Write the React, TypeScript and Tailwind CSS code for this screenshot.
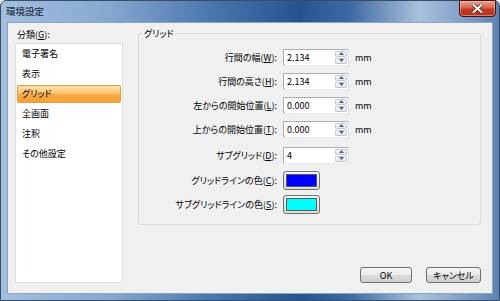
import React from 'react';

const font = "font-['Noto_Sans_CJK_JP','Noto_Sans',sans-serif] [font-feature-settings:'palt']";

function Arrow({ up }: { up?: boolean }) {
  return (
    <svg width="5" height="3" viewBox="0 0 5 3">
      <path d={up ? 'M0 3 L2.5 0 L5 3 Z' : 'M0 0 L5 0 L2.5 3 Z'} fill="#4d6185" />
    </svg>
  );
}

function SpinInput({ value }: { value: string }) {
  return (
    <div className="flex h-[17px] w-[66px] items-stretch border border-[#abadb3] border-r-[#dbdfe6] border-b-[#e3e9ef] bg-white">
      <div className="flex flex-1 items-center pl-[3px] leading-none">{value}</div>
      <div className="my-px mr-px flex w-[12px] flex-col gap-px">
        <div className="flex flex-1 items-center justify-center rounded-[1px] border border-[#c3cad4] bg-gradient-to-b from-[#f6f6f6] to-[#e4e6ea]">
          <Arrow up />
        </div>
        <div className="flex flex-1 items-center justify-center rounded-[1px] border border-[#c3cad4] bg-gradient-to-b from-[#f6f6f6] to-[#e4e6ea]">
          <Arrow />
        </div>
      </div>
    </div>
  );
}

function ColorButton({ color }: { color: string }) {
  return (
    <div className="h-[19px] w-[37px] rounded-[3px] border border-[#707070] bg-gradient-to-b from-[#f4f4f4] to-[#dcdcdc] p-[2px]">
      <div className={`h-full w-full border border-[#5a5a5a] ${color}`} />
    </div>
  );
}

function Label({ text, k }: { text: string; k: string }) {
  return (
    <div className="pr-0 text-right leading-none">
      {text}(<u>{k}</u>):
    </div>
  );
}

export default function App() {
  const items = ['電子署名', '表示', 'グリッド', '全画面', '注釈', 'その他設定'];
  return (
    <div className={`${font} flex h-[301px] w-[500px] flex-col rounded-t-[6px] border border-[#3a4d66] bg-[linear-gradient(90deg,#a3bfe0_0%,#86a7cf_22%,#4a77ad_42%,#24548e_60%,#3d6aa2_70%,#a9c1dc_84%,#8eaacd_90%,#5e83b2_100%)] text-[9px] text-black`}>
      <div className="flex h-[21px] shrink-0 items-start justify-between">
        <div className="flex h-[21px] items-center pl-[5px] text-[9.5px] text-[#10202f]">環境設定</div>
        <div className="-mt-px mr-[3px] flex h-[17px] w-[37px] items-center justify-center rounded-b-[4px] border border-[#3f1410] bg-[linear-gradient(180deg,#e7a594_0%,#d5644f_45%,#c23a25_55%,#b3321f_100%)] shadow-[inset_0_0_0_1px_rgba(255,200,190,0.5)]">
          <svg width="11" height="9" viewBox="0 0 11 9">
            <path d="M1.5 1 L9.5 8 M9.5 1 L1.5 8" stroke="#5a1a12" strokeWidth="3.4" strokeLinecap="square" />
            <path d="M1.5 1 L9.5 8 M9.5 1 L1.5 8" stroke="#ffffff" strokeWidth="2" strokeLinecap="square" />
          </svg>
        </div>
      </div>
      <div className="mx-[6px] mb-[6px] flex flex-1 border border-[#8ea6c1] bg-[#f0f0f0] pl-[7px] pr-[11px] pt-[6px] pb-[10px]">
        <div className="flex w-[108px] flex-col gap-[2px]">
          <div className="h-[12px] pl-[2px] leading-[12px]">
            分類(<u>G</u>):
          </div>
          <div className="flex flex-1 flex-col border border-[#dcdfe3] bg-white">
            {items.map((it, i) => (
              <div key={it} className="flex h-[20px] items-center px-px">
                {i === 2 ? (
                  <div className="flex h-[18px] w-full items-center rounded-[2px] border border-[#e39a3b] bg-[linear-gradient(180deg,#fde2b0_0%,#fbc36f_45%,#f8a83e_55%,#f6a23a_100%)] pl-[4px]">
                    {it}
                  </div>
                ) : (
                  <div className="pl-[5px]">{it}</div>
                )}
              </div>
            ))}
          </div>
        </div>
        <div className="ml-[15px] flex flex-1 flex-col">
          <div className="relative mt-[4px] h-[192px] rounded-[3px] border border-[#d5dfe5] pt-[11px]">
            <div className="absolute -top-[6px] left-[3px] bg-[#f0f0f0] px-[2px] leading-[12px]">グリッド</div>
            <div className="grid grid-cols-[138px_66px_auto] grid-rows-[24px_24px_24px_24px_28px_23px_25px] items-center gap-x-[6px]">
              <Label text="行間の幅" k="W" />
              <SpinInput value="2.134" />
              <div className="leading-none">mm</div>
              <Label text="行間の高さ" k="H" />
              <SpinInput value="2.134" />
              <div className="leading-none">mm</div>
              <Label text="左からの開始位置" k="L" />
              <SpinInput value="0.000" />
              <div className="leading-none">mm</div>
              <Label text="上からの開始位置" k="T" />
              <SpinInput value="0.000" />
              <div className="leading-none">mm</div>
              <Label text="サブグリッド" k="D" />
              <SpinInput value="4" />
              <div />
              <Label text="グリッドラインの色" k="C" />
              <ColorButton color="bg-[#0000ff]" />
              <div />
              <Label text="サブグリッドラインの色" k="S" />
              <ColorButton color="bg-[#00ffff]" />
              <div />
            </div>
          </div>
          <div className="mt-auto flex justify-end gap-[14px]">
            <button className="h-[16px] w-[52px] rounded-[3px] border border-[#707070] bg-[linear-gradient(180deg,#f2f2f2_0%,#ebebeb_50%,#dddddd_50%,#cfcfcf_100%)] leading-none">
              OK
            </button>
            <button className="h-[16px] w-[55px] rounded-[3px] border border-[#707070] bg-[linear-gradient(180deg,#f2f2f2_0%,#ebebeb_50%,#dddddd_50%,#cfcfcf_100%)] leading-none">
              キャンセル
            </button>
          </div>
        </div>
      </div>
    </div>
  );
}
